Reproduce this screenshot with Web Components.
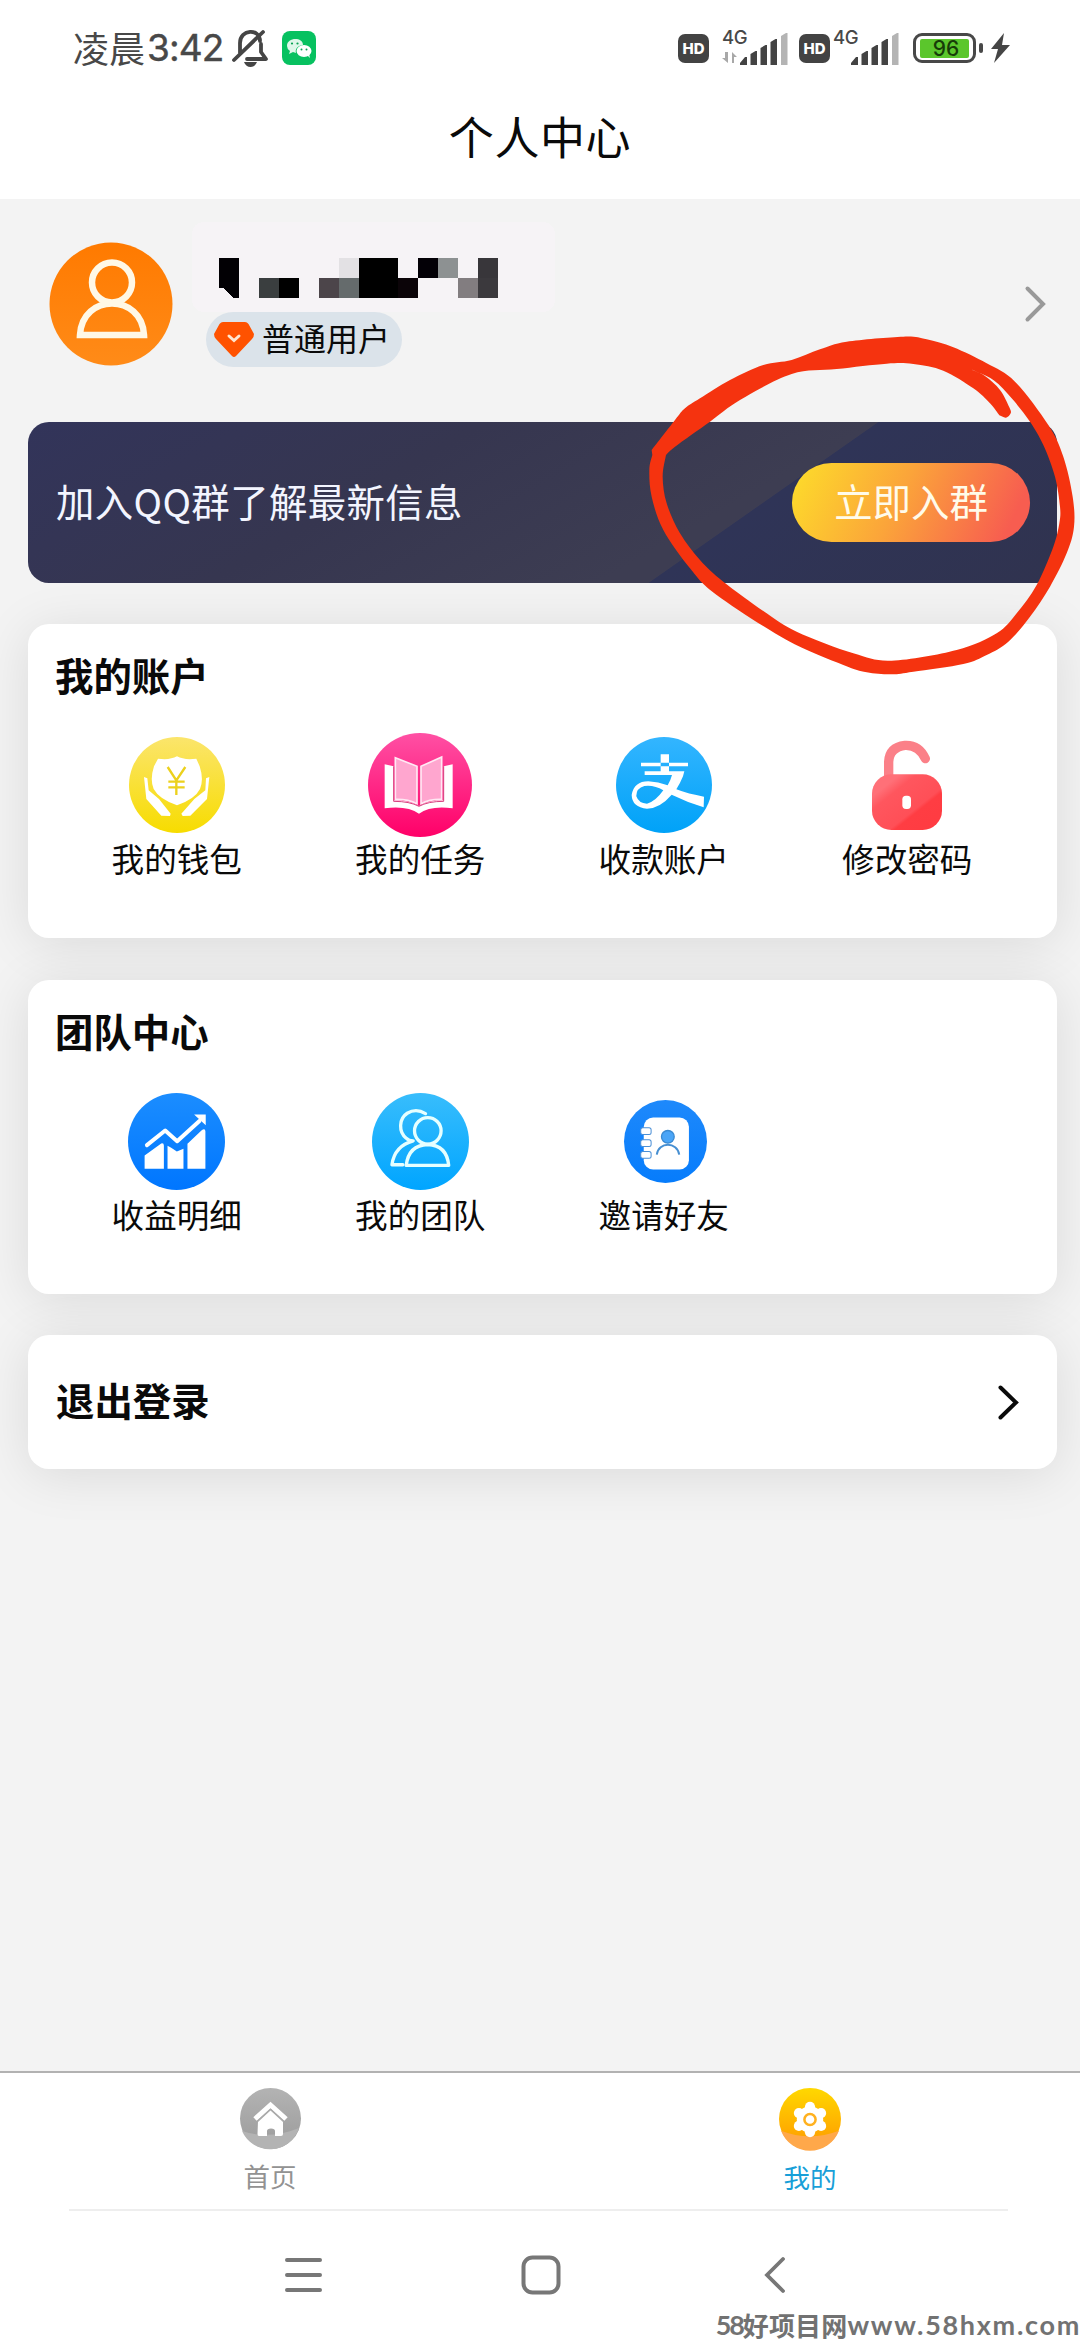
<!DOCTYPE html>
<html lang="zh-CN">
<head>
<meta charset="utf-8">
<title>个人中心</title>
<style>
html,body{margin:0;padding:0;background:#fff}
body{width:1080px;height:2340px;overflow:hidden;font-family:"Noto Sans CJK SC",sans-serif;color:#0a0a0a}
</style>
</head>
<body>
<profile-app></profile-app>
<script>
const define = (name, html, init) => {
  const t = document.createElement('template');
  t.innerHTML = html;
  customElements.define(name, class extends HTMLElement {
    constructor() {
      super();
      this.attachShadow({mode: 'open'}).appendChild(t.content.cloneNode(true));
    }
    connectedCallback() { if (init) init(this, this.shadowRoot); }
  });
};

// Each icon: [width, height, viewBox, body]
const ICONS = {
  wallet: [96, 96, '118 52 288 288', `<defs><linearGradient id="g" x2="0" y2="1"><stop stop-color="#fbe56c"/><stop offset="1" stop-color="#f7dc00"/></linearGradient></defs>
    <circle cx="262" cy="196" r="144" fill="url(#g)"/>
    <path d="M262 110Q240 122 205 117L193 140Q180 180 192 208Q208 238 262 257Q316 238 331 208Q343 180 330 140L320 117Q284 122 262 110Z" fill="#fff"/>
    <path d="M163 172L173 176L177 212L208 238L243 282L241 289L215 288L170 238ZM359 172L349 176L347 212L314 238L275 282L279 289L302 288L352 238Z" fill="#fff"/>
    <path d="M234 142L260 182L287 142M260 182V226M236 186H285M236 203H285" fill="none" stroke="#ecd11c" stroke-width="7"/>`],
  task: [104, 104, '835 38 312 312', `<defs><linearGradient id="g" x2="0" y2="1"><stop stop-color="#ff50a4"/><stop offset="1" stop-color="#ff0068"/></linearGradient></defs>
    <circle cx="991" cy="194" r="156" fill="url(#g)"/>
    <path d="M885 132L912 138V240Q960 240 988 257Q1015 240 1062 240V138L1089 132V264Q1022 255 988 280Q953 255 885 264Z" fill="#fff"/>
    <path d="M917 112L982 138V250Q955 236 917 237ZM1056 110L994 138V250Q1020 236 1056 237Z" fill="#ffa6cf" stroke="#ffe9f4" stroke-width="5"/>
    <path d="M912 138V243Q960 243 988 258Q1015 243 1062 243V138" fill="none" stroke="#d8407f" stroke-width="3"/>`],
  pay: [96, 96, '108 52 288 288', `<defs><linearGradient id="g" x2="0" y2="1"><stop stop-color="#33b5ff"/><stop offset="1" stop-color="#00a2f8"/></linearGradient></defs>
    <circle cx="252" cy="196" r="144" fill="url(#g)"/>
    <path d="M242 104H267V155H242ZM183 129H324V140H183ZM194 155H313L309 170Q300 192 289 209Q325 223 372 231L371 263Q320 247 275 225Q240 266 201 267Q156 263 155 226Q162 185 205 185Q235 187 263 197Q272 182 276 166H194ZM250 212Q222 195 193 199Q168 206 169 230Q176 251 201 252Q226 246 250 212Z" fill="#fff" fill-rule="evenodd"/>`],
  lock: [70, 90, '876 60 210 270', `<defs><linearGradient id="g" x2="1" y2="1"><stop offset=".2" stop-color="#ff7078"/><stop offset=".32" stop-color="#ff565e"/><stop offset=".62" stop-color="#ff4f57"/><stop offset=".66" stop-color="#ff3d43"/><stop offset="1" stop-color="#ff3b41"/></linearGradient></defs>
    <path d="M926 185V125Q928 82 975 76Q1017 74 1036 116" fill="none" stroke="#fb8088" stroke-width="28" stroke-linecap="round"/>
    <rect x="876" y="163" width="210" height="167" rx="58" fill="url(#g)"/>
    <rect x="967" y="227" width="26" height="40" rx="11" fill="#fff"/>`],
  income: [97, 97, '115 66 292 292', `<defs><linearGradient id="g" x2="0" y2="1"><stop stop-color="#1b8dff"/><stop offset="1" stop-color="#0076ff"/></linearGradient></defs>
    <circle cx="261" cy="212" r="146" fill="url(#g)"/>
    <path d="M172 223L227 179L263 211L330 150" fill="none" stroke="#fff" stroke-width="12" stroke-linecap="round" stroke-linejoin="round"/>
    <path d="M314 131H349V163ZM165 254L215 218Q223 216 223 224V294H165ZM234 225L245 231L262 242L282 234V294H234ZM294 219L336 179Q347 171 348 181V294H294Z" fill="#fff"/>`],
  team: [97, 97, '845 67 292 292', `<defs><linearGradient id="g" x2="0" y2="1"><stop stop-color="#38bdfc"/><stop offset="1" stop-color="#00a5ff"/></linearGradient></defs>
    <circle cx="991" cy="213" r="146" fill="url(#g)"/>
    <g fill="none" stroke="#e6ffff" stroke-width="10" stroke-linecap="round" stroke-linejoin="round">
    <path d="M1006 129Q978 112 951 128C925 145 925 184 948 203Q956 211 969 211Q913 226 905 283H938"/><circle cx="1013" cy="181" r="40"/><path d="M948 285Q955 224 1013 222Q1070 224 1076 285Z"/></g>`],
  invite: [83, 83, '134 86 248 248', `<defs><linearGradient id="g" x2="0" y2="1"><stop stop-color="#1e89fb"/><stop offset="1" stop-color="#067cfc"/></linearGradient></defs>
    <circle cx="258" cy="210" r="124" fill="url(#g)"/>
    <rect x="193" y="138" width="135" height="156" rx="28" fill="#fff"/>
    <g fill="#fff" stroke="#4a8fd6" stroke-width="3"><rect x="184" y="169" width="31" height="20" rx="6"/><rect x="184" y="205" width="31" height="20" rx="6"/><rect x="184" y="240" width="31" height="20" rx="6"/></g>
    <circle cx="265" cy="196" r="19" fill="#4aa5f7" stroke="#3a8ad2" stroke-width="4"/>
    <path d="M232 249C237 210 293 210 299 249" fill="none" stroke="#468fd2" stroke-width="6"/>`],
  home: [61, 61, '0 0 61 61', `<defs><linearGradient id="g" x2="0" y2="1"><stop stop-color="#b3b3b3"/><stop offset="1" stop-color="#9b9b9b"/></linearGradient></defs>
    <circle cx="30.5" cy="30.5" r="30.5" fill="url(#g)"/><path d="M2 43Q30 52 59 40A30.500 30.500 0 0 1 2 43Z" fill="#b3b3b3"/>
    <path d="M15 31L30.500 17L46 31" fill="none" stroke="#fff" stroke-width="5"/>
    <path d="M18 33L30.500 22L43 33V46Q43 48 41 48H35V43Q35 40.500 31 40.500Q27 40.500 27 43V48H19Q17.500 48 17.500 46Z" fill="#fff"/>
    <path d="M17.500 33.500L30.500 21.500L43.500 33.500" fill="none" stroke="#aaa" stroke-width="1.500"/>`],
  gear: [62, 62, '0 0 61 61', `<defs><linearGradient id="g" x2="0" y2="1"><stop stop-color="#ffd800"/><stop offset="1" stop-color="#ff9800"/></linearGradient></defs>
    <circle cx="30.5" cy="30.5" r="30.5" fill="url(#g)"/><path d="M2 42Q30 53 59 42A30.500 30.500 0 0 1 2 42Z" fill="#ffa84a"/>
    <g fill="#fff"><circle cx="30.5" cy="31" r="13"/><circle cx="30.5" cy="18.500" r="5"/><circle cx="30.5" cy="43.500" r="5"/><circle cx="19.600" cy="24.700" r="5"/><circle cx="41.400" cy="24.700" r="5"/><circle cx="19.600" cy="37.300" r="5"/><circle cx="41.400" cy="37.300" r="5"/></g>
    <circle cx="30.5" cy="31" r="5.500" fill="#fff" stroke="#ffb11f" stroke-width="2.500"/>`],
  avatar: [124, 124, '0 0 124 124', `<defs><linearGradient id="g" x2="0" y2="1"><stop stop-color="#ff7a00"/><stop offset="1" stop-color="#ff8b18"/></linearGradient></defs>
    <circle cx="62" cy="62" r="61.500" fill="url(#g)"/>
    <g fill="none" stroke="#fff8e6" stroke-width="6.500"><circle cx="63" cy="40.500" r="20"/><path d="M31 93C33 51 93 51 95 93Z"/></g>`],
  bell: [36, 38, '0 0 36 38', `<g fill="none" stroke="#454545" stroke-width="3.800" stroke-linecap="round" stroke-linejoin="round"><path d="M8 24V14C8 0 28 -1 28 12M29 15V23L34 30H15M2 31L31 3"/></g><path d="M12 33H25Q23 38 18.500 38Q14 38 12 33Z" fill="#454545"/>`],
  wechat: [34, 34, '0 0 34 34', `<rect width="34" height="34" rx="8" fill="#07c160"/>
    <path d="M5 15C5 6 21 6 21 14C15 15 13 18 14 22L11 21L7 23L8 20Q5 18 5 15Z" fill="#dff7ea"/><ellipse cx="22" cy="20" rx="7.500" ry="6" fill="#fff"/><path d="M25 24L28 27L27 23Z" fill="#fff"/>
    <g fill="#07a352"><circle cx="10" cy="12.500" r="1.100"/><circle cx="15.500" cy="12.500" r="1.100"/><circle cx="19.500" cy="18.500" r="1"/><circle cx="24.500" cy="18.500" r="1"/></g>`],
  bolt: [19, 30, '0 0 19 30', `<path d="M13 0L0 16H7L3 30L19 12H11Z" fill="#454545"/>`],
  gem: [40, 35, '0 0 40 35', `<path d="M9 0H31Q33 0 34.500 2L40 12Q40 15 38 17L22 34Q20 36 18 34L2 17Q0 15 0 12L5.500 2Q7 0 9 0Z" fill="#ff5200"/><path d="M15 14L20 18.500L25 14" fill="none" stroke="#ffe6cf" stroke-width="3" stroke-linecap="round"/>`],
  next: [21, 36, '0 0 21 36', `<path d="M2.500 2.500L18 18L2.500 33.500" fill="none" stroke="#999" stroke-width="4" stroke-linecap="round"/>`],
  exit: [21, 35, '0 0 21 35', `<path d="M2.500 2.500L18 17.500L2.500 32.500" fill="none" stroke="#0a0a0a" stroke-width="4" stroke-linecap="round"/>`]
};

define('app-icon', `<style>:host{display:block;flex:none;line-height:0}svg{display:block;overflow:visible}</style><span></span>`, (el, r) => {
  const [w, h, box, body] = ICONS[el.getAttribute('name')];
  r.querySelector('span').innerHTML = `<svg width="${w}" height="${h}" viewBox="${box}">${body}</svg>`;
});

define('hd-badge', `<style>:host{display:flex;flex:none;align-items:center;justify-content:center;width:31px;height:29px;border-radius:7px;background:#434343;color:#fff;font:800 15px/1 Inter,sans-serif}</style><span>HD</span>`);

define('signal-meter', `<style>:host{display:block;flex:none;width:65px;height:38px}
  .net{display:block;height:18px;margin-top:-1px;font:500 18.5px/18px Inter,sans-serif;color:#484848;letter-spacing:-.3px}
  svg{display:block;margin-top:-12.5px;overflow:visible}
  </style><span class="net">4G</span>
  <svg width="65" height="31" viewBox="0 0 65 31"><g class="data" fill="#a8a8a8"><path d="M3 18h3v11L0 24h3zM10 29V18l5 5h-3v6z"/></g>
  <g fill="#434343"><path d="M18 31v-2l5-6h2v8zM28.500 31V20l5-3h1.500v14zM38.500 31V14l5-3h1.500v20zM48.500 31V8l5-3h1.500v26z"/></g><path d="M59 31V2l5-3h1.500v32z" fill="#b4b4b4"/></svg>`, (el, r) => {
  if (!el.hasAttribute('data-active')) { r.querySelector('.data').remove(); }
});

define('battery-level', `<style>:host{display:flex;align-items:center;flex:none;gap:3px}
  .case{box-sizing:border-box;width:63px;height:30px;border:3.5px solid #484848;border-radius:9px;padding:2.5px 4px;display:flex}
  .fill{flex:1;background:#5bc62c;border-radius:2px;display:flex;align-items:center;justify-content:center;font:500 21px/1 Inter,sans-serif;color:#173c08;padding-left:3px}
  .nub{width:3.5px;height:10px;border-radius:2px;background:#484848}</style>
  <div class="case"><div class="fill"><slot></slot></div></div><div class="nub"></div>`);

define('status-bar', `<style>:host{display:flex;box-sizing:border-box;height:78px;padding:18px 70.500px 0 73px;align-items:center;justify-content:space-between;color:#484848;flex:none}
  div{display:flex;align-items:center}
  .time{font-size:36px;line-height:1;margin-top:-3px}.num{font:400 37px/1 Inter,"Noto Sans",sans-serif;margin:-2px 0 0 2px;letter-spacing:-.9px;width:82px;-webkit-text-stroke:.4px #484848}
  </style>
  <div><span class="time">凌晨</span><span class="num">3:42</span><app-icon name="bell" style="margin-left:3px"></app-icon><app-icon name="wechat" style="margin-left:14px"></app-icon></div>
  <div><hd-badge></hd-badge><signal-meter data-active style="margin-left:13px"></signal-meter><hd-badge style="margin-left:12px"></hd-badge><signal-meter style="margin-left:3px"></signal-meter><battery-level style="margin-left:15px">96</battery-level><app-icon name="bolt" style="margin-left:8px"></app-icon></div>`);

define('page-header', `<style>:host{display:flex;box-sizing:border-box;align-items:center;justify-content:center;height:121px;padding-bottom:6px;font-size:45px;line-height:1;letter-spacing:.6px;flex:none}</style><slot></slot>`);

define('masked-name', `<style>:host{display:block}svg{display:block}</style>
  <svg width="363" height="90" viewBox="0 0 363 90" shape-rendering="crispEdges"><rect width="363" height="90" rx="12" fill="#f6f3f6"/><g class="cells"></g></svg>`, (el, r) => {
  const cells = [[0,0,'#020004'],[6,0,'#e3e1e4'],[7,0,'#000'],[8,0,'#000'],[10,0,'#030006'],[11,0,'#8d9192'],[13,0,'#38363a'],
    [2,1,'#3a3e3f'],[3,1,'#000'],[5,1,'#4c454a'],[6,1,'#656b6c'],[7,1,'#000'],[8,1,'#000'],[9,1,'#0b0408'],[12,1,'#827d80'],[13,1,'#3b393d']];
  r.querySelector('.cells').innerHTML = cells.map(([c, y, f]) => `<rect x="${27 + c * 19.93}" y="${36 + y * 20}" width="20" height="20" fill="${f}"/>`).join('') +
    '<path d="M27 56h20v20h-6l-10-10h-4z" fill="#020004"/>';
});

define('user-profile', `<style>:host{display:flex;height:223px;flex:none;padding:0 34px 0 49px;box-sizing:border-box}
  app-icon.a{margin-top:42.5px}.info{flex:1;padding:23px 0 0 19px}
  .level{display:flex;align-items:center;box-sizing:border-box;width:196px;height:55px;border-radius:28px;background:#dbe3ea;margin-left:14px;padding-left:8px;gap:8px;font-size:32px;line-height:1}
  .level span{margin-top:-6px}
  .n{margin-top:87px}</style>
  <app-icon class="a" name="avatar"></app-icon><div class="info"><masked-name></masked-name><div class="level"><app-icon name="gem"></app-icon><span><slot></slot></span></div></div><app-icon class="n" name="next"></app-icon>`);

define('group-banner', `<style>:host{display:flex;align-items:center;justify-content:space-between;box-sizing:border-box;height:161px;flex:none;margin:0 23px 0 28px;padding:0 27px 0 28px;border-radius:21px;color:#f3f5ff;font-size:38.400px;line-height:1;
  background:linear-gradient(145deg,transparent 0 67.5%,#2f3457 67.6%,#30334f 100%),linear-gradient(150deg,#32345a 0,#363650 35%,#3d3d52 65%)}
  .msg{letter-spacing:.4px;margin-top:-5px}
  .go{box-sizing:border-box;width:238px;height:79px;border-radius:40px;display:flex;align-items:center;justify-content:center;background:linear-gradient(115deg,#fdd62c 6%,#fba43a 45%,#f75d50 90%);color:#fffbea;padding-bottom:4px}</style>
  <span class="msg"><slot></slot></span><div class="go"><slot name="action"></slot></div>`);

define('menu-card', `<style>:host{display:block;box-sizing:border-box;height:314px;margin:0 23px 0 28px;padding:31px 27px 0;background:#fff;border-radius:21px;box-shadow:0 6px 52px rgba(0,0,0,.1);flex:none}
  :host([row]){display:flex;height:134px;padding:0 38px 0 28px;align-items:center;justify-content:space-between}
  .title{font-size:38.400px;line-height:38px;font-weight:600}.items{display:flex;margin-top:40px}
  :host([row]) .items{margin:0}:host([row]) .title{margin-top:-6px}</style>
  <div class="title"><slot name="title"></slot></div><div class="items"><slot></slot></div>`);

define('menu-item', `<style>:host{display:flex;flex-direction:column;align-items:center;width:243.500px}
  .pic{display:flex;align-items:center;justify-content:center;height:104px}:host([icon=invite]) .pic{padding-left:4px}.label{font-size:32.600px;line-height:34px;margin-top:4px}</style>
  <div class="pic"></div><div class="label"><slot></slot></div>`, (el, r) => {
  r.querySelector('.pic').innerHTML = `<app-icon name="${el.getAttribute('icon')}"></app-icon>`;
});

define('tab-item', `<style>:host{display:flex;flex:1;flex-direction:column;align-items:center;color:#929292;font-size:26.500px;line-height:28px}
  :host([active]){color:#189fd8}span{margin-top:13px}</style><div></div><span><slot></slot></span>`, (el, r) => {
  r.querySelector('div').innerHTML = `<app-icon name="${el.getAttribute('icon')}"></app-icon>`;
});

define('tab-bar', `<style>:host{display:flex;box-sizing:border-box;height:138px;border-top:2px solid #b2b2b2;background:#fff;padding-top:15px;flex:none}</style><slot></slot>`);

define('system-nav', `<style>:host{display:block;flex:none;background:#fff;height:131px}
  .rule{height:2px;background:#eee;margin:0 72px 0 69px}
  .keys{display:flex;align-items:center;justify-content:space-between;padding:43px 295px 0 284px;height:41px}
  .keys .mid{margin-right:7px}
  .mark{display:flex;justify-content:flex-end;align-items:center;height:27px;margin-top:16px;color:#727272;white-space:nowrap;line-height:27px;font-size:26px}
  .d{font:700 27px/27px Lato,sans-serif;letter-spacing:-2.200px}.c{font-weight:700;letter-spacing:.2px}.u{font:700 27px/27px Lato,sans-serif;letter-spacing:1.700px;margin-right:-1px}</style>
  <div class="rule"></div><div class="keys">
  <svg width="40" height="40" viewBox="0 0 40 40"><path d="M3 5H36M3 20H36M3 35H36" stroke="#777" stroke-width="4" stroke-linecap="round"/></svg>
  <svg class="mid" width="40" height="40" viewBox="0 0 40 40"><rect x="2.500" y="2.500" width="35" height="35" rx="9" fill="none" stroke="#777" stroke-width="4"/></svg>
  <svg width="21" height="40" viewBox="0 0 21 40"><path d="M19 4L3 20L19 36" fill="none" stroke="#777" stroke-width="3.800" stroke-linecap="round"/></svg></div>
  <div class="mark"><span class="d">58</span><span class="c">好项目网</span><span class="u">www.58hxm.com</span></div>`);

// Hand-drawn ring: smooth curves through the outer edge and the inner edge.
define('marker-ring', `<style>:host{display:block;position:absolute;left:620px;top:320px;width:460px;height:370px;pointer-events:none}svg{display:block}</style>
  <svg width="460" height="370" viewBox="0 0 1380 1110"><path fill="#f5330f" fill-rule="evenodd"/></svg>`, (el, r) => {
  const smooth = p => p.slice(0, -1).reduce((s, b, i) => {
    const a = p[i - 1] || b, c = p[i + 1], d = p[i + 2] || c;
    return s + `C${b[0] + (c[0] - a[0]) / 6} ${b[1] + (c[1] - a[1]) / 6} ${c[0] - (d[0] - b[0]) / 6} ${c[1] - (d[1] - b[1]) / 6} ${c[0]} ${c[1]}`;
  }, '');
  const outer = [[95,390],[165,300],[195,265],[240,235],[330,180],[430,135],[515,120],[600,88],[680,65],[850,50],[920,58],[1000,82],[1100,130],[1185,185],[1285,315],[1330,410],[1358,530],[1362,620],[1340,700],[1290,800],[1230,890],[1165,965],[1100,1005],[1030,1032],[880,1055],[815,1063],[740,1057],[670,1035],[500,960],[290,825],[210,745],[130,630],[95,530],[88,450],[97,405]];
  const top = [[138,405],[165,380],[270,305],[360,240],[515,162],[650,147],[800,131],[880,132],[970,152],[1060,205],[1110,250],[1138,286]];
  const cap = [[1138,286],[1158,293],[1172,280],[1168,262],[1140,210],[1095,168],[1045,145]];
  const side = [[1045,145],[1120,180],[1175,235],[1230,305],[1270,375],[1305,470],[1320,560],[1318,610],[1300,680],[1250,795],[1190,880],[1130,940],[1010,990],[815,1022],[700,1000],[530,935],[440,880],[310,785],[240,720],[180,640],[140,550],[128,470],[138,405]];
  r.querySelector('path').setAttribute('d', 'M95 390' + smooth(outer) + 'Z M138 405' + smooth(top) + smooth(cap) + smooth(side) + 'Z');
});

define('profile-app', `<style>:host{display:flex;flex-direction:column;position:relative;width:1080px;height:2340px;overflow:hidden;background:#fff}
  main{flex:1;display:flex;flex-direction:column;background:#f3f3f3;overflow:hidden}
  .c1{margin-top:41px}.c2{margin-top:42px}.c3{margin-top:41px}</style>
  <status-bar></status-bar><page-header>个人中心</page-header>
  <main>
    <user-profile>普通用户</user-profile>
    <group-banner>加入QQ群了解最新信息<span slot="action">立即入群</span></group-banner>
    <menu-card class="c1"><span slot="title">我的账户</span>
      <menu-item icon="wallet">我的钱包</menu-item><menu-item icon="task">我的任务</menu-item><menu-item icon="pay">收款账户</menu-item><menu-item icon="lock">修改密码</menu-item></menu-card>
    <menu-card class="c2"><span slot="title">团队中心</span>
      <menu-item icon="income">收益明细</menu-item><menu-item icon="team">我的团队</menu-item><menu-item icon="invite">邀请好友</menu-item></menu-card>
    <menu-card class="c3" row><span slot="title">退出登录</span><app-icon name="exit"></app-icon></menu-card>
  </main>
  <tab-bar><tab-item icon="home">首页</tab-item><tab-item icon="gear" active>我的</tab-item></tab-bar>
  <system-nav></system-nav>
  <marker-ring></marker-ring>`);
</script>
</body>
</html>
